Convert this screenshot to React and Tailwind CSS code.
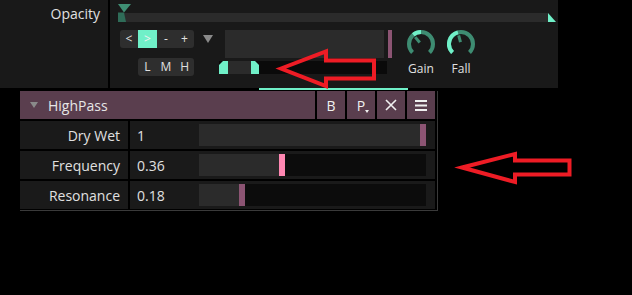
import React from "react";

const TEAL = "#70f0c8";
const DTEAL = "#3e8c72";

function pt(cx, cy, r, a) {
  const rad = (a * Math.PI) / 180;
  return [cx + r * Math.sin(rad), cy - r * Math.cos(rad)];
}
function arc(cx, cy, r, a0, a1) {
  const [x0, y0] = pt(cx, cy, r, a0);
  const [x1, y1] = pt(cx, cy, r, a1);
  const large = a1 - a0 > 180 ? 1 : 0;
  return `M ${x0} ${y0} A ${r} ${r} 0 ${large} 1 ${x1} ${y1}`;
}

function Knob({ label, b0, b1, angle }) {
  const [nx, ny] = pt(14, 14, 9, angle);
  const [sx, sy] = pt(14, 14, 2, angle);
  return (
    <div className="flex flex-col items-center w-[28px]">
      <svg width="28" height="28" viewBox="0 0 28 28">
        <path d={arc(14, 14, 12, -135, 135)} stroke={DTEAL} strokeWidth="4" fill="none" />
        <path d={arc(14, 14, 12, b0, b1)} stroke={TEAL} strokeWidth="4" fill="none" />
        <line x1={sx} y1={sy} x2={nx} y2={ny} stroke={DTEAL} strokeWidth="3" strokeLinecap="butt" />
      </svg>
      <div className="mt-[3px] text-[12px] leading-[16px] text-[#e0e0e0] whitespace-nowrap">{label}</div>
    </div>
  );
}

const rows = [
  { label: "Dry Wet", value: "1", v: 1, color: "#8c5473" },
  { label: "Frequency", value: "0.36", v: 0.36, color: "#ff87b2" },
  { label: "Resonance", value: "0.18", v: 0.18, color: "#8c5473" },
];

function Row({ label, value, v, color }) {
  const W = 227;
  const left = Math.round(v * (W - 6));
  return (
    <div className="flex h-[28px] gap-[2px]">
      <div className="w-[108px] bg-[#1a1a1a] flex items-center justify-end pr-[8px] text-[14px] text-[#e0e0e0]">
        {label}
      </div>
      <div className="flex-1 bg-[#1a1a1a] flex">
        <div className="w-[69px] flex items-center pl-[7px] text-[14px] text-[#e0e0e0]">{value}</div>
        <div className="w-[227px] my-[3px] bg-[#0c0c0c] flex">
          <div className="bg-[#2b2b2b] h-full" style={{ width: left }} />
          <div className="w-[6px] h-full" style={{ background: color }} />
        </div>
      </div>
    </div>
  );
}

export default function App() {
  return (
    <div
      className="relative w-[632px] h-[295px] bg-black overflow-hidden"
      style={{ fontFamily: '"Open Sans", "Liberation Sans", sans-serif' }}
    >
      {/* top panel */}
      <div className="w-[558px] h-[88px] bg-[#191919] flex">
        <div className="w-[108px] flex justify-end pr-[8px] pt-[4px] text-[14px] leading-[20px] text-[#e0e0e0]">
          Opacity
        </div>
        <div className="w-[2px] bg-black" />
        <div className="flex-1 pl-[8px] flex flex-col">
          {/* opacity slider */}
          <div className="mt-[3px] h-[19px] w-[438px] relative flex">
            <div className="w-[430px] mt-[10px] h-[9px] bg-[#2b2b2b]" />
            <svg width="8" height="19" viewBox="0 0 8 19" className="shrink-0">
              <polygon points="0,10 8,19 0,19" fill={TEAL} />
            </svg>
            <svg width="14" height="19" viewBox="0 0 14 19" className="absolute left-0 top-0">
              <polygon points="0,1 13,1 6,9.5" fill="#3f8f74" />
              <polygon points="0,9.5 6,9.5 8,19 0,19" fill="#2f6c58" />
            </svg>
          </div>
          {/* controls */}
          <div className="mt-[8px] flex items-start">
            <div className="ml-[2px] w-[74px] flex flex-col items-end">
              <div className="flex h-[18px] rounded-[3px] overflow-hidden bg-[#2e2e2e] text-[12px] text-[#e0e0e0]">
                <div className="w-[18px] flex items-center justify-center">&lt;</div>
                <div className="w-[19px] flex items-center justify-center bg-[#70f0c8] text-[#f0f0f0]">&gt;</div>
                <div className="w-[18px] flex items-center justify-center">-</div>
                <div className="w-[19px] flex items-center justify-center">+</div>
              </div>
              <div className="mt-[10px] flex h-[18px] w-[56px] rounded-[3px] bg-[#2e2e2e] text-[12px] text-[#e0e0e0]">
                <div className="flex-1 flex items-center justify-center">L</div>
                <div className="flex-1 flex items-center justify-center">M</div>
                <div className="flex-1 flex items-center justify-center">H</div>
              </div>
            </div>
            <svg width="10" height="8" viewBox="0 0 10 8" className="ml-[9px] mt-[5px]">
              <polygon points="0,0 10,0 5,8" fill="#8a8a8a" />
            </svg>
            <div className="ml-[6px] w-[173px] flex flex-col">
              <div className="flex h-[28px]">
                <div className="ml-[6px] w-[159px] bg-[#2b2b2b]" />
                <div className="ml-[4px] w-[4px] bg-[#8c5473]" />
              </div>
              <div className="mt-[3px] w-[168px] h-[13px] bg-[#0a0a0a] flex">
                <svg width="9" height="13" viewBox="0 0 9 13">
                  <polygon points="4,0 9,0 9,13 0,13 0,4" fill={TEAL} />
                </svg>
                <div className="w-[23px] h-full bg-[#2b2b2b]" />
                <svg width="8" height="13" viewBox="0 0 8 13">
                  <polygon points="0,0 4,0 8,4 8,13 0,13" fill={TEAL} />
                </svg>
              </div>
            </div>
            <div className="ml-[15px] flex gap-[12px]">
              <Knob label="Gain" b0={-40} b1={0} angle={-40} />
              <Knob label="Fall" b0={-135} b1={-15} angle={-15} />
            </div>
          </div>
        </div>
      </div>
      <div className="h-[2px] ml-[259px] w-[149px] bg-[#70f0c8]" />
      {/* lower panel */}
      <div className="mt-[1px] ml-[20px] w-[418px] pr-[2px] pb-[1px] border-r border-b border-[#3a3a3a] flex flex-col gap-[2px]">
        <div className="flex h-[28px] gap-[2px]">
          <div className="flex-1 bg-[#5a3e4e] flex items-center pl-[10px] text-[14px] text-[#e6e6e6]">
            <svg width="8" height="6" viewBox="0 0 8 6" className="mr-[10px]">
              <polygon points="0,0 8,0 4,6" fill="#8a8a8a" />
            </svg>
            HighPass
          </div>
          <div className="w-[28px] bg-[#5a3e4e] flex items-center justify-center text-[14px] text-[#f0f0f0]">B</div>
          <div className="w-[28px] bg-[#5a3e4e] flex items-center justify-center text-[14px] text-[#f0f0f0] relative">
            P
            <svg width="4" height="3" viewBox="0 0 4 3" className="absolute left-[18px] top-[19px]">
              <polygon points="0,0 4,0 2,3" fill="#f0f0f0" />
            </svg>
          </div>
          <div className="w-[28px] bg-[#5a3e4e] flex items-center justify-center">
            <svg width="12" height="12" viewBox="0 0 12 12">
              <path d="M1 1 L11 11 M11 1 L1 11" stroke="#f0f0f0" strokeWidth="1.6" />
            </svg>
          </div>
          <div className="w-[28px] bg-[#5a3e4e] flex items-center justify-center">
            <svg width="12" height="11" viewBox="0 0 12 11">
              <rect x="0" y="0" width="12" height="2" fill="#f0f0f0" />
              <rect x="0" y="4.5" width="12" height="2" fill="#f0f0f0" />
              <rect x="0" y="9" width="12" height="2" fill="#f0f0f0" />
            </svg>
          </div>
        </div>
        {rows.map((r) => (
          <Row key={r.label} {...r} />
        ))}
      </div>
      {/* annotation arrows */}
      <svg width="632" height="295" viewBox="0 0 632 295" className="absolute left-0 top-0 pointer-events-none">
        <polygon
          points="281,68.5 326,51.5 326,60.5 374,60.5 374,78.5 326,78.5 326,86"
          fill="none"
          stroke="#ee1c25"
          strokeWidth="4"
          strokeLinejoin="miter"
        />
        <polygon
          points="462,167.5 515,154 515,160.5 569.5,160.5 569.5,174.5 515,174.5 515,182"
          fill="none"
          stroke="#ee1c25"
          strokeWidth="4"
          strokeLinejoin="miter"
        />
      </svg>
    </div>
  );
}
